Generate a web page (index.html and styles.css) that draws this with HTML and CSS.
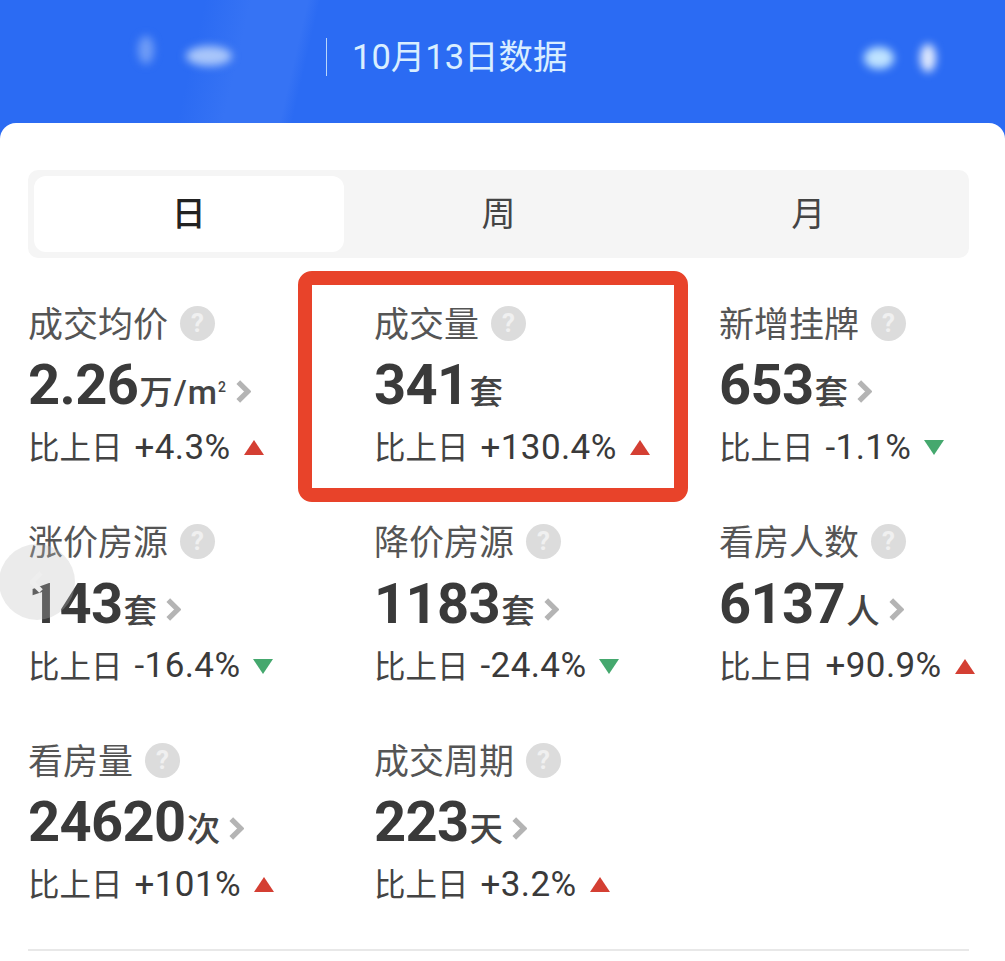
FILE: index.html
```html
<!DOCTYPE html>
<html lang="zh-CN">

<head>
    <meta charset="UTF-8">
    <meta name="viewport" content="width=device-width, initial-scale=1.0">
    <title>10月13日数据</title>
    <link rel="stylesheet" href="styles.css">
</head>

<body>
    <header class="top-bar">
        <div class="smudge smudge-a"></div>
        <div class="smudge smudge-b"></div>
        <div class="smudge smudge-c"></div>
        <div class="smudge smudge-d"></div>
        <div class="date-title">10月13日数据</div>
    </header>

    <main class="card">
        <div class="tabs">
            <div class="tab active">日</div>
            <div class="tab">周</div>
            <div class="tab">月</div>
        </div>

        <div class="metrics">
            <div class="metric">
                <div class="metric-title">成交均价 <span class="help">?</span></div>
                <div class="metric-value"><b>2.26</b><span class="unit unit-area">万/m<sup>2</sup></span>
                    <svg class="chevron" viewBox="0 0 14 22"><path d="M2 2l9 9-9 9" /></svg>
                </div>
                <div class="metric-change">比上日 <span class="num">+4.3%</span><i class="tri up"></i></div>
            </div>
            <div class="metric">
                <div class="metric-title">成交量 <span class="help">?</span></div>
                <div class="metric-value"><b>341</b><span class="unit">套</span></div>
                <div class="metric-change">比上日 <span class="num">+130.4%</span><i class="tri up"></i></div>
            </div>
            <div class="metric">
                <div class="metric-title">新增挂牌 <span class="help">?</span></div>
                <div class="metric-value"><b>653</b><span class="unit">套</span>
                    <svg class="chevron" viewBox="0 0 14 22"><path d="M2 2l9 9-9 9" /></svg>
                </div>
                <div class="metric-change">比上日 <span class="num">-1.1%</span><i class="tri down"></i></div>
            </div>
            <div class="metric">
                <div class="metric-title">涨价房源 <span class="help">?</span></div>
                <div class="metric-value"><b>143</b><span class="unit">套</span>
                    <svg class="chevron" viewBox="0 0 14 22"><path d="M2 2l9 9-9 9" /></svg>
                </div>
                <div class="metric-change">比上日 <span class="num">-16.4%</span><i class="tri down"></i></div>
            </div>
            <div class="metric">
                <div class="metric-title">降价房源 <span class="help">?</span></div>
                <div class="metric-value"><b>1183</b><span class="unit">套</span>
                    <svg class="chevron" viewBox="0 0 14 22"><path d="M2 2l9 9-9 9" /></svg>
                </div>
                <div class="metric-change">比上日 <span class="num">-24.4%</span><i class="tri down"></i></div>
            </div>
            <div class="metric">
                <div class="metric-title">看房人数 <span class="help">?</span></div>
                <div class="metric-value"><b>6137</b><span class="unit">人</span>
                    <svg class="chevron" viewBox="0 0 14 22"><path d="M2 2l9 9-9 9" /></svg>
                </div>
                <div class="metric-change">比上日 <span class="num">+90.9%</span><i class="tri up"></i></div>
            </div>
            <div class="metric">
                <div class="metric-title">看房量 <span class="help">?</span></div>
                <div class="metric-value"><b>24620</b><span class="unit">次</span>
                    <svg class="chevron" viewBox="0 0 14 22"><path d="M2 2l9 9-9 9" /></svg>
                </div>
                <div class="metric-change">比上日 <span class="num">+101%</span><i class="tri up"></i></div>
            </div>
            <div class="metric">
                <div class="metric-title">成交周期 <span class="help">?</span></div>
                <div class="metric-value"><b>223</b><span class="unit">天</span>
                    <svg class="chevron" viewBox="0 0 14 22"><path d="M2 2l9 9-9 9" /></svg>
                </div>
                <div class="metric-change">比上日 <span class="num">+3.2%</span><i class="tri up"></i></div>
            </div>
        </div>

        <div class="divider"></div>
    </main>

    <!-- overlays -->
    <div class="highlight-box"></div>
    <div class="back-btn">
        <svg viewBox="0 0 14 22"><path d="M11 2l-9 9 9 9" /></svg>
    </div>
</body>

</html>
```

FILE: styles.css
```css
* {
    margin: 0;
    padding: 0;
    box-sizing: border-box;
}

html,
body {
    height: 961px;
    overflow: hidden;
}

body {
    position: relative;
    width: 1005px;
    background-color: #2b6bf3;
    font-family: Roboto, "Noto Sans CJK SC", sans-serif;
    color: #444;
}

.top-bar {
    position: relative;
    height: 123px;
    padding: 38px 0 0 326px;
    background: linear-gradient(103deg, #2b6bf3 0, #2b6bf3 200px, #3673f4 245px, #3673f4 300px, #2b6bf3 312px);
}

.date-title {
    height: 38px;
    padding-left: 25px;
    border-left: 1.5px solid #b9d6fb;
    font-size: 34.5px;
    line-height: 38px;
    color: #d9eeff;
}

.smudge {
    position: absolute;
    border-radius: 50%;
    filter: blur(4px);
}

.smudge-a {
    left: 138px;
    top: 36px;
    width: 16px;
    height: 28px;
    background-color: #6f9cf6;
}

.smudge-b {
    left: 186px;
    top: 46px;
    width: 46px;
    height: 20px;
    background-color: #a9c6fa;
}

.smudge-c {
    left: 864px;
    top: 47px;
    width: 30px;
    height: 22px;
    background-color: #bfe3ff;
}

.smudge-d {
    left: 920px;
    top: 44px;
    width: 16px;
    height: 28px;
    background-color: #dfe9fd;
}

.card {
    height: 838px;
    padding: 47px 36px 0 28px;
    background-color: white;
    border-radius: 16px 16px 0 0;
}

.tabs {
    display: grid;
    grid-template-columns: repeat(3, 1fr);
    height: 88px;
    padding: 6px;
    background-color: #f5f5f5;
    border-radius: 10px;
}

.tab {
    font-size: 34px;
    line-height: 76px;
    text-align: center;
    color: #444;
}

.tab.active {
    background-color: white;
    border-radius: 12px;
    font-weight: 500;
    color: #222;
}

.metrics {
    display: grid;
    grid-template-columns: 346px 345px 1fr;
    grid-auto-rows: 218.5px;
    padding: 40px 0 0;
    height: 690.5px;
}

.metric-title {
    display: flex;
    align-items: center;
    gap: 12px;
    height: 50px;
    padding-bottom: 4px;
    font-size: 35px;
    color: #555;
    white-space: nowrap;
}

.help {
    width: 35px;
    height: 35px;
    margin-top: 4px;
    border-radius: 50%;
    background-color: #dcdcdc;
    font-size: 26px;
    font-weight: 700;
    line-height: 35px;
    text-align: center;
    color: #f0f0f0;
}

.metric-value {
    display: flex;
    align-items: baseline;
    height: 74px;
    line-height: 74px;
    white-space: nowrap;
}

.metric-value b {
    font-size: 56px;
    font-weight: 700;
    letter-spacing: -0.6px;
    color: #3a3a3a;
}

.unit {
    margin-left: 1px;
    font-size: 33.5px;
    font-weight: 500;
    color: #444;
}

.unit-area {
    letter-spacing: 1px;
}

.unit sup {
    font-size: 14px;
    line-height: 0;
}

.chevron {
    align-self: center;
    width: 15px;
    height: 23px;
    margin: 12px 0 0 9px;
}

.chevron path,
.back-btn path {
    fill: none;
    stroke: #b4b4b4;
    stroke-width: 5;
}

.metric-change {
    display: flex;
    align-items: center;
    height: 50px;
    padding-bottom: 4px;
    font-size: 31.5px;
    color: #444;
    white-space: nowrap;
}

.num {
    margin: 4px 0 0 12px;
    font-size: 35px;
    letter-spacing: 0.4px;
    color: #3a3a3a;
}

.tri {
    width: 0;
    height: 0;
    margin: 5px 0 0 13px;
    border-left: 10.5px solid transparent;
    border-right: 10.5px solid transparent;
}

.tri.up {
    border-bottom: 15px solid #d43f33;
}

.tri.down {
    border-top: 15px solid #45a86e;
}

.divider {
    height: 2px;
    background-color: #e8e8e8;
}

.highlight-box {
    position: absolute;
    left: 298px;
    top: 271px;
    width: 390px;
    height: 231px;
    border: 14px solid #e8432a;
    border-radius: 14px;
}

.back-btn {
    position: absolute;
    left: -1px;
    top: 544px;
    display: flex;
    align-items: center;
    justify-content: center;
    width: 76px;
    height: 76px;
    border-radius: 50%;
    background-color: rgba(190, 190, 190, 0.3);
}

.back-btn svg {
    width: 14px;
    height: 22px;
}

.back-btn path {
    stroke: #eeeeee;
}
```
